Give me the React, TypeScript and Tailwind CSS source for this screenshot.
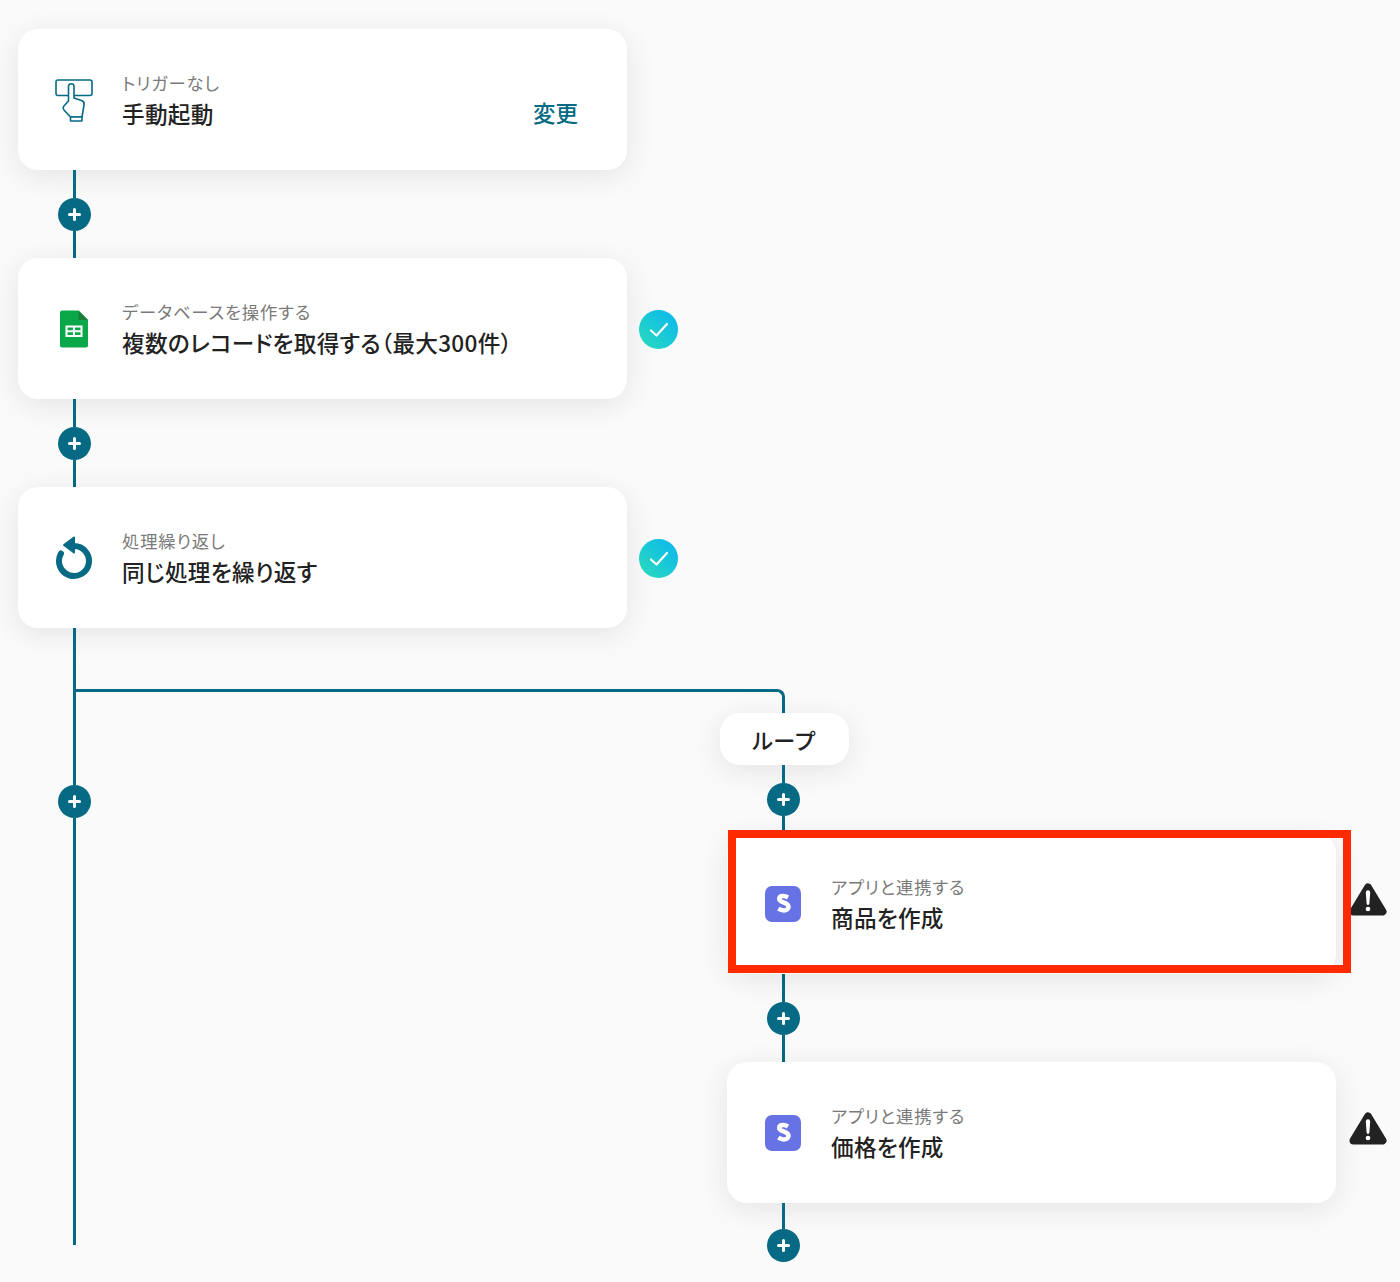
import type { ReactNode } from "react"

const TEAL = "#066a84"

const Plus = () => (
	<div className="flex h-[33px] w-[33px] shrink-0 items-center justify-center rounded-full bg-[#066a84]">
		<svg width="13" height="13" viewBox="0 0 13 13">
			<path d="M6.5 1.5v10M1.5 6.5h10" stroke="#fff" strokeWidth="3" strokeLinecap="round" />
		</svg>
	</div>
)

const Line = ({ className }: { className: string }) => <div className={`w-[3px] shrink-0 bg-[#066a84] ${className}`} />

// 88px link between two cards, with the add button in the middle
const Connector = () => (
	<div className="ml-[40px] flex w-[33px] flex-col items-center">
		<Line className="h-[28px]" />
		<Plus />
		<Line className="h-[27px]" />
	</div>
)

const HandIcon = () => (
	<svg width="38" height="46" viewBox="0 0 38 46" fill="none" stroke={TEAL} strokeWidth="1.6" strokeLinejoin="round">
		<rect x="1" y="3" width="36" height="15.5" rx="2" />
		<path
			d="M13.5 24V9.5a2.75 2.75 0 0 1 5.5 0V21l7.5 2.5q3 1 2.6 4L27 40H15.5L9 33q-1.500-1.800-.5-3.500z"
			fill="#fff"
		/>
		<rect x="15.500" y="40" width="11.500" height="4" rx="0.500" fill="#fff" />
	</svg>
)

const SheetsIcon = () => (
	<svg width="38" height="38" viewBox="0 0 38 38">
		<path
			d="M7 0.500h16.500L33 10v25.500a2 2 0 0 1-2 2H7a2 2 0 0 1-2-2v-33a2 2 0 0 1 2-2z"
			fill="#0ba84a"
		/>
		<path d="M23.500 0.500L33 10h-9.500z" fill="#188038" />
		<path
			d="M10.500 15.500h17v11.500h-17z M12.500 17.500v2.800h5.500v-2.800z M20 17.500v2.800h5.500v-2.800z M12.500 22.200v2.800h5.500v-2.800z M20 22.200v2.800h5.500v-2.800z"
			fill="#fff"
			fillRule="evenodd"
		/>
	</svg>
)

const LoopIcon = () => (
	<svg width="38" height="46" viewBox="0 0 38 46" fill="none">
		<path d="M19 11A15 15 0 1 1 6 18.500" stroke={TEAL} strokeWidth="6" strokeLinecap="round" />
		<path d="M9 10L19 2.500V17.500z" fill={TEAL} stroke={TEAL} strokeWidth="2" strokeLinejoin="round" />
	</svg>
)

const StripeIcon = () => (
	<svg width="36" height="36" viewBox="0 0 36 36">
		<rect width="36" height="36" rx="7" fill="#6772e5" />
		<path
			d="M23 11.500c-1.500-.9-3.200-1.400-4.800-1.400-2.500 0-4 1.100-4 3 0 4 9.300 2.800 9.300 7.800 0 2.200-2 3.500-4.600 3.500-2 0-3.900-.6-5.600-1.700"
			fill="none"
			stroke="#fff"
			strokeWidth="4.500"
		/>
	</svg>
)

const CheckBadge = () => (
	<div className="mt-[2px] flex h-[39px] w-[39px] items-center justify-center rounded-full bg-gradient-to-tr from-[#2ddcb8] to-[#0fb4f0]">
		<svg width="20" height="16" viewBox="0 0 20 16" fill="none">
			<path d="M2 8.500l5.500 5L18 2" stroke="#fff" strokeWidth="2.200" strokeLinecap="round" strokeLinejoin="round" />
		</svg>
	</div>
)

const WarnBadge = () => (
	<svg className="mb-[9px]" width="38" height="35" viewBox="0 0 38 35">
		<path d="M19 5.500L33.500 29.500H4.500z" fill="#222" stroke="#222" strokeWidth="8" strokeLinejoin="round" />
		<path d="M16.800 10.500a2.200 2.200 0 0 1 4.400 0l-.8 11a1.400 1.400 0 0 1-2.800 0z" fill="#fff" />
		<circle cx="19" cy="27" r="2.300" fill="#fff" />
	</svg>
)

type StepProps = {
	icon: ReactNode
	label: string
	title: string
	action?: string
}

const StepCard = ({ icon, label, title, action }: StepProps) => (
	<div className="flex h-[141px] w-[609px] shrink-0 items-center rounded-[20px] bg-white pl-[37px] pr-[49px] shadow-[0_6px_30px_rgba(0,0,0,0.09)]">
		<div className="flex w-[38px] shrink-0 items-center justify-center">{icon}</div>
		<div className="ml-[29px] flex-1 pt-[3px] [font-feature-settings:'palt']">
			<div className="text-[17.300px] leading-[24px] tracking-[0.9px] text-[#7a7a7a]">{label}</div>
			<div className="mt-[1px] text-[22.600px] leading-[36px] font-medium tracking-[0.3px] text-[#222]">{title}</div>
		</div>
		{action && <div className="mt-[29px] pb-[4px] text-[22.500px] leading-[36px] font-medium text-[#066a84]">{action}</div>}
	</div>
)

const App = () => {
	return (
		<div className="h-[1282px] w-[1400px] overflow-hidden bg-[#fafafa] pl-[18px] pt-[29px] font-['Noto_Sans_CJK_JP','Noto_Sans',sans-serif]">
			<StepCard icon={<HandIcon />} label="トリガーなし" title="手動起動" action="変更" />
			<Connector />
			<div className="flex items-center gap-[12px]">
				<StepCard icon={<SheetsIcon />} label="データベースを操作する" title="複数のレコードを取得する（最大300件）" />
				<CheckBadge />
			</div>
			<Connector />
			<div className="flex items-center gap-[12px]">
				<StepCard icon={<LoopIcon />} label="処理繰り返し" title="同じ処理を繰り返す" />
				<CheckBadge />
			</div>

			<div className="flex">
				<div className="ml-[40px] flex w-[33px] shrink-0 flex-col items-center">
					<Line className="h-[157px]" />
					<Plus />
					<Line className="h-[427px]" />
				</div>

				<div>
					<div className="-ml-[15px] mt-[61px] h-[24px] w-[709px] rounded-tr-[8px] border-r-[3px] border-t-[3px] border-[#066a84]" />
					<div className="ml-[629px]">
						<div className="flex h-[52px] w-[129px] items-center justify-center rounded-[20px] bg-white pr-[2px] text-[22px] font-medium text-[#222] shadow-[0_6px_30px_rgba(0,0,0,0.09)]">
							ループ
						</div>
						<div className="ml-[47px] flex w-[33px] flex-col items-center">
							<Line className="h-[18px]" />
							<Plus />
							<Line className="h-[17px]" />
						</div>
						<div className="relative ml-[7px] flex w-[660px] items-center gap-[13px]">
							<StepCard icon={<StripeIcon />} label="アプリと連携する" title="商品を作成" />
							<WarnBadge />
							{/* red highlight drawn over the card */}
							<div className="absolute left-px top-[-3px] h-[143px] w-[623px] border-[8px] border-[#ff2a00]" />
						</div>
						<div className="ml-[7px]">
							<Connector />
						</div>
						<div className="ml-[7px] flex w-[660px] items-center gap-[13px]">
							<StepCard icon={<StripeIcon />} label="アプリと連携する" title="価格を作成" />
							<WarnBadge />
						</div>
						<div className="ml-[47px] flex w-[33px] flex-col items-center">
							<Line className="h-[26px]" />
							<Plus />
						</div>
					</div>
				</div>
			</div>
		</div>
	)
}

export default App
